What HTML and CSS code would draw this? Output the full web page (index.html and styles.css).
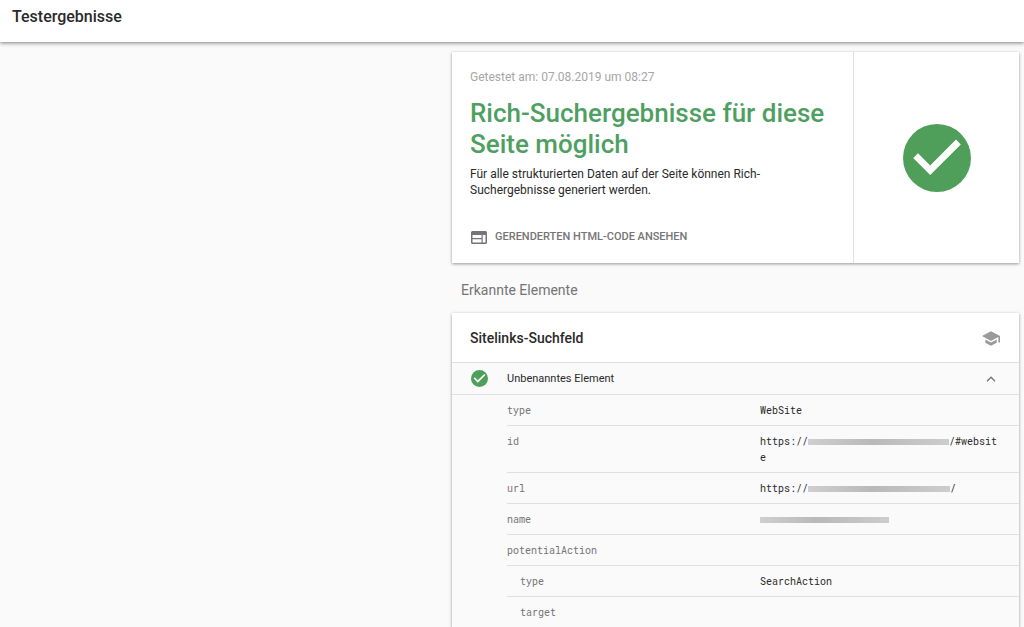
FILE: index.html
```html
<!DOCTYPE html>
<html lang="de">
<head>
<meta charset="utf-8">
<meta name="viewport" content="width=device-width, initial-scale=1">
<title>Testergebnisse</title>
<link rel="stylesheet" href="styles.css">
</head>
<body>
<header class="topbar"><h1 class="topbar-title">Testergebnisse</h1></header>
<main class="layout">
  <div class="results">
    <section class="card summary">
      <div class="summary-text">
        <p class="tested">Getestet am: 07.08.2019 um 08:27</p>
        <h2 class="verdict">Rich-Suchergebnisse für diese Seite möglich</h2>
        <p class="description">Für alle strukturierten Daten auf der Seite können Rich-Suchergebnisse generiert werden.</p>
        <button class="source-button" type="button">
          <svg class="source-icon" viewBox="0 0 16 13" aria-hidden="true"><path fill="currentColor" fill-rule="evenodd" d="M1.500 0h13A1.500 1.500 0 0 1 16 1.500v10a1.500 1.500 0 0 1-1.500 1.500h-13A1.500 1.500 0 0 1 0 11.500v-10A1.500 1.500 0 0 1 1.500 0zM1.500 4v3H10.500V4zM1.500 8.200v3.300H10.500V8.200zM11.700 4v7.500h2.800V4z"/></svg>
          <span>GERENDERTEN HTML-CODE ANSEHEN</span>
        </button>
      </div>
      <div class="summary-status">
        <svg class="status-icon" viewBox="2 2 20 20" role="img" aria-label="Bestanden"><circle cx="12" cy="12" r="10" fill="#4f9f5a"/><path fill="#fff" d="M10 17l-5-5 1.410-1.410L10 14.170l7.590-7.590L19 8z"/></svg>
      </div>
    </section>
    <h2 class="section-title">Erkannte Elemente</h2>
    <section class="card">
      <div class="item-header">
        <h3 class="item-title">Sitelinks-Suchfeld</h3>
        <svg class="learn-icon" viewBox="1 3 22 18" aria-hidden="true"><path fill="currentColor" d="M5 13.180v4L12 21l7-3.820v-4L12 17l-7-3.820zM12 3L1 9l11 6 9-4.910V17h2V9L12 3z"/></svg>
      </div>
      <button class="element-toggle" type="button" aria-expanded="true">
        <svg class="element-icon" viewBox="2 2 20 20" aria-hidden="true"><circle cx="12" cy="12" r="10" fill="#4f9f5a"/><path fill="#fff" d="M10 17l-5-5 1.410-1.410L10 14.170l7.590-7.590L19 8z"/></svg>
        <span class="element-name">Unbenanntes Element</span>
        <svg class="chevron" viewBox="0 0 10 6" aria-hidden="true"><path d="M1 5.200 5 1.200l4 4" fill="none" stroke="currentColor" stroke-width="1.300"/></svg>
      </button>
      <div class="properties-wrap">
        <table class="properties">
          <tbody>
            <tr><th scope="row">type</th><td>WebSite</td></tr>
            <tr><th scope="row">id</th><td>https://<span class="redacted redacted-id"></span><span>/#websit</span><wbr><span>e</span></td></tr>
            <tr><th scope="row">url</th><td>https://<span class="redacted redacted-url"></span>/</td></tr>
            <tr><th scope="row">name</th><td><span class="redacted redacted-name"></span></td></tr>
            <tr><th scope="row">potentialAction</th><td></td></tr>
            <tr><th scope="row" class="nested">type</th><td>SearchAction</td></tr>
            <tr><th scope="row" class="nested">target</th><td></td></tr>
          </tbody>
        </table>
      </div>
    </section>
  </div>
</main>
</body>
</html>
```
FILE: styles.css
```css
* { box-sizing: border-box; }

body {
  margin: 0;
  background: #fafafa;
  color: #2a2a2a;
  font-family: Roboto, "Liberation Sans", sans-serif;
  font-size: 12px;
  line-height: 16px;
}

h1, h2, h3, p { margin: 0; }

button {
  border: 0;
  padding: 0;
  background: none;
  font: inherit;
  text-align: left;
  cursor: pointer;
}

.topbar {
  padding: 7px 12px 15px;
  background: #fff;
  box-shadow: 0 1px 4px rgba(0, 0, 0, 0.5);
}

.topbar-title {
  font-size: 16px;
  font-weight: 500;
  line-height: 20px;
}

.layout {
  display: grid;
  grid-template-columns: minmax(0, 452fr) minmax(0, 567fr);
  padding: 10px 5px 0 0;
}

.results { grid-column: 2; }

.card {
  background: #fff;
  box-shadow: 0 1px 3px rgba(0, 0, 0, 0.4);
}

.summary { display: flex; }

.summary-text {
  flex: 1;
  min-width: 0;
  padding: 17px 18px 18px;
}

.tested { color: #a6a6a6; }

.verdict {
  margin-top: 13px;
  color: #4f9f62;
  font-size: 26px;
  font-weight: 500;
  line-height: 31px;
}

.description { margin-top: 6px; }

.source-button {
  display: flex;
  align-items: center;
  gap: 8px;
  margin-top: 31px;
  padding-left: 1px;
  color: #757575;
  font-size: 11px;
  font-weight: 500;
}

.source-icon { width: 16px; height: 13px; }

.summary-status {
  display: flex;
  flex: 0 0 166px;
  align-items: center;
  justify-content: center;
  border-left: 1px solid #e0e0e0;
}

.status-icon { width: 68px; height: 68px; }

.section-title {
  padding: 18px 9px 13px;
  color: #757575;
  font-size: 14px;
  font-weight: 400;
  line-height: 19px;
}

.item-header {
  display: flex;
  align-items: center;
  justify-content: space-between;
  padding: 15px 19px 14px 18px;
}

.item-title {
  font-size: 14px;
  font-weight: 500;
  line-height: 20px;
}

.learn-icon { width: 18px; height: 15px; color: #9a9a9a; }

.element-toggle {
  display: flex;
  align-items: center;
  width: 100%;
  padding: 7px 23px 7px 19px;
  border-top: 1px solid #e0e0e0;
  border-bottom: 1px solid #e0e0e0;
  background: #fafafa;
  color: #2a2a2a;
  font-size: 11px;
}

.element-icon { width: 17px; height: 17px; }

.element-name { flex: 1; padding-left: 19px; }

.chevron { width: 10px; height: 6px; color: #757575; }

.properties-wrap {
  padding-left: 55px;
  background: #fafafa;
}

.properties {
  width: 100%;
  border-spacing: 0;
  table-layout: fixed;
  font-family: "Roboto Mono", "DejaVu Sans Mono", monospace;
  font-size: 10px;
  line-height: 16px;
}

.properties th,
.properties td {
  height: 31px;
  padding: 8px 18px 6px 0;
  border-bottom: 1px solid #e0e0e0;
  text-align: left;
  vertical-align: top;
}

.properties th {
  width: 253px;
  color: #757575;
  font-weight: 400;
}

.properties .nested { padding-left: 13px; }

.properties td { word-break: break-all; }

.redacted {
  display: inline-block;
  height: 6px;
  background: linear-gradient(90deg, #cfcfcf, #b9b9b9 45%, #cdcdcd);
}

.redacted-id { width: 141px; }
.redacted-url { width: 142px; }
.redacted-name { width: 129px; }
```
